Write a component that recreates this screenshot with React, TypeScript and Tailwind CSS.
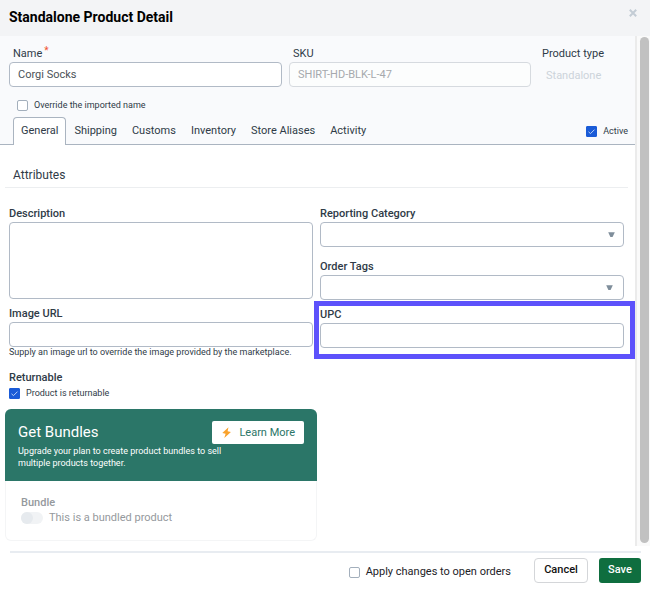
import { useState } from "react";
import type { ReactNode } from "react";

const inputBase =
  "block w-full h-[25px] rounded border border-[#b1bac6] bg-white px-2 text-[11px] text-[#4b5258] outline-none";
const fieldLabel = "block h-[17px] text-[11px] leading-[18px] font-medium text-[#2f3b47]";
const topLabel = "block h-[17px] px-1 text-[11px] leading-[18px] text-[#2f3b47]";

function Check({
  id,
  children,
  defaultChecked = false,
  className = "",
}: {
  id: string;
  children: ReactNode;
  defaultChecked?: boolean;
  className?: string;
}) {
  return (
    <label htmlFor={id} className={"flex items-center " + className}>
      <span className="relative block size-[11px] shrink-0">
        <input
          id={id}
          type="checkbox"
          defaultChecked={defaultChecked}
          className="peer block size-[11px] appearance-none rounded-xs border border-[#a3afbc] bg-white checked:rounded-[1px] checked:border-[#1a5bd7] checked:bg-[#1a5bd7]"
        />
        <svg
          viewBox="0 0 11 11"
          className="pointer-events-none absolute inset-0 hidden size-[11px] peer-checked:block"
          fill="none"
          stroke="#b9d0f7"
          strokeWidth="1"
        >
          <path d="M2.5 5.8 4.5 7.6 8.5 3.6" />
        </svg>
      </span>
      {children}
    </label>
  );
}

function SelectField({ id, label, arrow }: { id: string; label: string; arrow: string }) {
  return (
    <div>
      <label htmlFor={id} className={fieldLabel}>
        {label}
      </label>
      <div className="relative">
        <select id={id} className={inputBase + " appearance-none"} />
        <svg
          viewBox="0 0 7 6"
          className={"pointer-events-none absolute top-[10px] h-[6px] w-[7px] " + arrow}
        >
          <path d="M.2.2h6.6L4.6 4.9H2.4Z" fill="#7f8e9b" />
        </svg>
      </div>
    </div>
  );
}

const tabs = ["General", "Shipping", "Customs", "Inventory", "Store Aliases", "Activity"];

export default function App() {
  const [active, setActive] = useState("General");

  return (
    <div className="flex min-h-screen flex-col bg-white font-['Roboto',sans-serif] text-[#2f3b47] antialiased">
      <header className="flex h-9 items-start justify-between bg-[#f3f4f6] pr-3 pl-[9px]">
        <h1 className="pt-[7px] text-[14px] leading-5 font-bold text-black">
          Standalone Product Detail
        </h1>
        <button type="button" aria-label="Close" className="mt-2 p-px">
          <svg viewBox="0 0 8 8" className="size-2" stroke="#c3ccd5" strokeWidth="2">
            <path d="M.8.8 7.2 7.2M7.2.8.8 7.2" />
          </svg>
        </button>
      </header>

      <div className="flex grow">
        <main className="min-w-0 grow">
          <section className="bg-[#f9fafc]">
            <div className="grid grid-cols-[273fr_242fr_90fr] gap-x-[7px] pt-[9px] pr-[7px] pl-[9px]">
              <div>
                <label htmlFor="name" className={topLabel}>
                  Name
                  <span className="ml-[2px] align-top text-[10px] leading-3 text-[#f0532d]">*</span>
                </label>
                <input id="name" defaultValue="Corgi Socks" className={inputBase} />
              </div>
              <div>
                <label htmlFor="sku" className={topLabel}>
                  SKU
                </label>
                <input
                  id="sku"
                  disabled
                  defaultValue="SHIRT-HD-BLK-L-47"
                  className="block h-[25px] w-full rounded border border-[#d6dadf] bg-[#fcfdfd] px-2 text-[11px] text-[#a6a9ad]"
                />
              </div>
              <div>
                <div className={topLabel}>Product type</div>
                <div className="mt-[6px] px-2 text-[11px] leading-4 text-[#ccd3da]">Standalone</div>
              </div>
            </div>

            <Check id="override" className="mt-[10px] ml-[17px] h-4 gap-[6px] text-[9px] leading-4">
              Override the imported name
            </Check>

            <div className="mt-1 flex justify-between border-b border-[#aab4c0] pr-[7px] pl-[13px]">
              <div role="tablist" className="-mb-px flex gap-px">
                {tabs.map((t) => (
                  <button
                    key={t}
                    type="button"
                    role="tab"
                    aria-selected={active === t}
                    onClick={() => setActive(t)}
                    className={
                      active === t
                        ? "h-7 rounded-t border border-b-0 border-[#aab4c0] bg-white px-[7px] text-[11px]"
                        : "h-7 px-[7px] text-[11px]"
                    }
                  >
                    {t}
                  </button>
                ))}
              </div>
              <Check id="active" defaultChecked className="gap-[6px] pt-px text-[9px] leading-4">
                Active
              </Check>
            </div>
          </section>

          <h2 className="mr-[7px] ml-[5px] border-b border-[#eceef0] pt-[21px] pb-[3px] pl-2 text-[12px] leading-[18px]">
            Attributes
          </h2>

          <div className="grid grid-cols-2 gap-x-[7px] pt-[17px] pr-[11px] pb-[5px] pl-[9px]">
            <div>
              <label htmlFor="description" className={fieldLabel}>
                Description
              </label>
              <textarea
                id="description"
                className="block h-[77px] w-full resize-none rounded border border-[#b1bac6] bg-white p-2 text-[11px]"
              />

              <label htmlFor="image" className={fieldLabel + " mt-[6px]"}>
                Image URL
              </label>
              <input id="image" aria-describedby="image-help" className={inputBase} />
              <p id="image-help" className="text-[9px] leading-[10px]">
                Supply an image url to override the image provided by the marketplace.
              </p>

              <h3 className={fieldLabel + " mt-3"}>Returnable</h3>
              <Check id="returnable" defaultChecked className="h-[14px] gap-[6px] text-[9px] leading-4">
                Product is returnable
              </Check>

              <section className="-mx-1 mt-[9px] rounded-md border border-t-0 border-[#f4f5f6]">
                <div className="-mx-px flex h-[72px] items-start justify-between rounded-t-md bg-[#2b7668] pt-3 pr-[13px] pl-[13px] text-white">
                  <div>
                    <h3 className="text-[15px] leading-[22px]">Get Bundles</h3>
                    <p className="mt-[2px] -mr-8 w-[220px] text-[9px] leading-3">
                      Upgrade your plan to create product bundles to sell multiple products together.
                    </p>
                  </div>
                  <button
                    type="button"
                    className="flex h-[23px] shrink-0 items-center gap-[7px] rounded-xs bg-white px-[9px] text-[11px] text-[#2b7668]"
                  >
                    <svg viewBox="0 0 10 10" className="size-[11px]" fill="#f9a22b">
                      <path d="M6.8.2 1.2 5.5 4.2 6.2 3 9.9 9 4.5 6 3.8Z" />
                    </svg>
                    <span className="pt-px">Learn More</span>
                  </button>
                </div>
                <div className="px-[15px] pt-[14px] pb-[15px] text-[#95999d]">
                  <h4 className="text-[11px] leading-4 font-medium">Bundle</h4>
                  <label htmlFor="bundle" className="flex h-[14px] items-center gap-[6px] text-[11px]">
                    <input
                      id="bundle"
                      type="checkbox"
                      role="switch"
                      disabled
                      className="block h-3 w-[22px] appearance-none rounded-full bg-[#f1f3f5] before:block before:size-3 before:rounded-full before:bg-[#e6eaee]"
                    />
                    This is a bundled product
                  </label>
                </div>
              </section>
            </div>

            <div>
              <SelectField id="category" label="Reporting Category" arrow="right-[9px]" />
              <div className="mt-[11px]">
                <SelectField id="tags" label="Order Tags" arrow="right-[11px]" />
              </div>
              <div className="-mr-[11px] -ml-[6px] mt-px border-5 border-[#5d52fb] pr-[6px] pb-[6px] pl-px">
                <label htmlFor="upc" className={fieldLabel}>
                  UPC
                </label>
                <input id="upc" className={inputBase} />
              </div>
            </div>
          </div>
        </main>

        <div className="flex w-[15px] shrink-0 border-l-2 border-[#ebebeb] bg-[#fafafa] pt-px pr-px pb-[3px] pl-[3px]">
          <div className="w-[9px] rounded-full bg-[#c1c1c1]" />
        </div>
      </div>

      <footer className="mt-[5px] mr-[9px] ml-[10px] flex items-center justify-end border-t-2 border-[#e8ecf1] pt-[5px] pb-[7px]">
        <Check id="apply" className="mr-[23px] gap-[6px] pt-[3px] text-[11px] text-[#1d2227]">
          Apply changes to open orders
        </Check>
        <button
          type="button"
          className="mr-[11px] h-[25px] w-[54px] rounded border border-[#d4d6d9] bg-white text-[11px] font-medium text-[#111]"
        >
          Cancel
        </button>
        <button
          type="button"
          className="h-[25px] w-[42px] rounded-[3px] bg-[#0f6e3f] text-[11px] font-medium text-white"
        >
          Save
        </button>
      </footer>
    </div>
  );
}
